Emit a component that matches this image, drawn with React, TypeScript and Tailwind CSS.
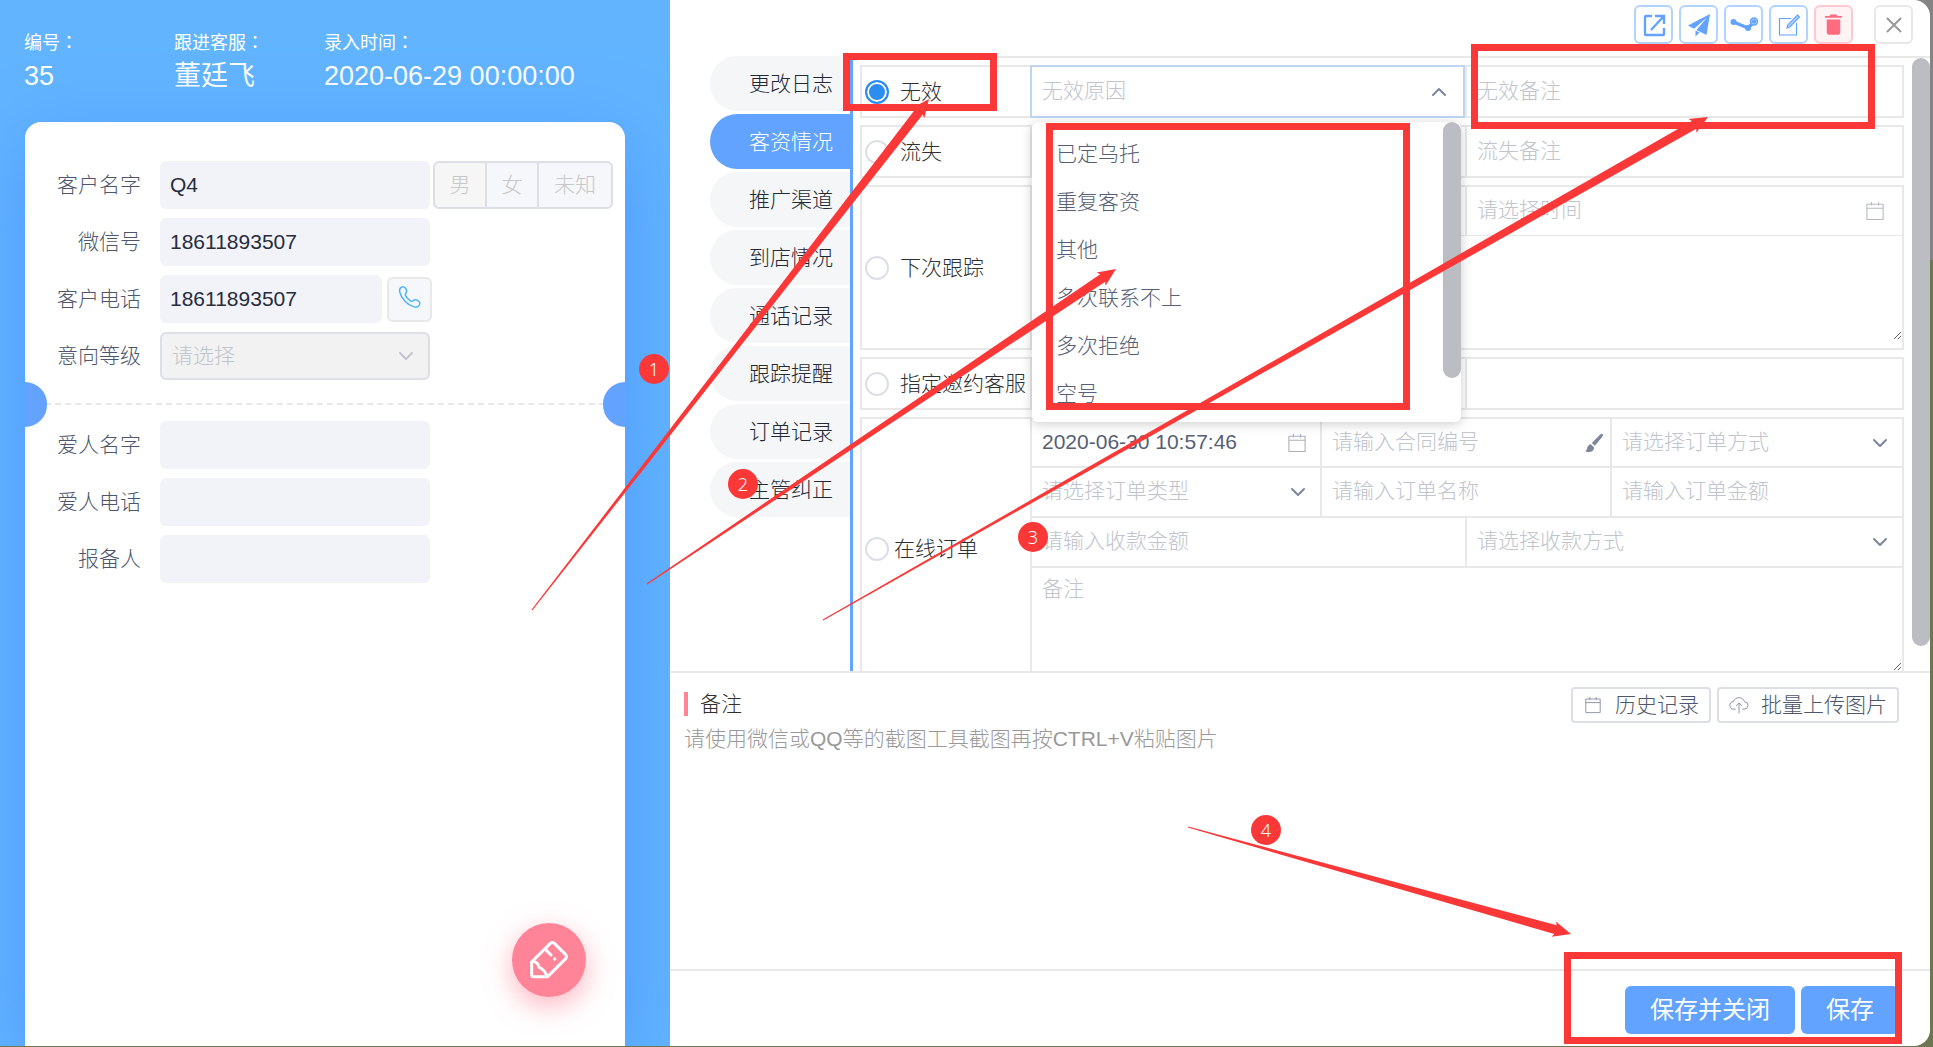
import type { ReactNode } from 'react';
import { ChevronDown, ChevronUp } from 'lucide-react';
import { IoMdTrash } from 'react-icons/io';

const TABS = ['更改日志', '客资情况', '推广渠道', '到店情况', '通话记录', '跟踪提醒', '订单记录', '主管纠正'];
const REASONS = ['已定乌托', '重复客资', '其他', '多次联系不上', '多次拒绝', '空号'];

const FIELD =
  'block h-full w-full min-w-0 bg-transparent px-2.5 pb-0.5 text-[21px] text-[#565f75] outline-none placeholder:text-[#c0c4cc]';

function CalendarIcon({ className }: { className: string }) {
  return (
    <svg viewBox="0 0 20 22" className={className} fill="none" stroke="currentColor" strokeWidth="1.2">
      <path d="M1 3.500h18v17H1zM1 8h18M6 1v4M14 1v4" />
    </svg>
  );
}

function PhoneIcon() {
  return (
    <svg viewBox="0 0 24 24" className="mb-1 size-6" fill="none" stroke="#4db5f5" strokeWidth="1.5">
      <path d="M3.500 2.200c1.800-1 3.600 0 4.600 1.900 1 2 .8 3-.2 4-.9 1-.8 1.700-.2 2.800 1.200 2.200 2.600 3.600 4.700 5 1.100.6 1.800.8 2.700-.1 1.200-1.200 2.600-1.400 4.400-.4 2 1.100 2.700 2.800 1.900 4.600-.9 1.900-3.200 2.500-5.400 1.900C9.500 20 3.200 13.600 1.700 6.900 1.300 4.900 1.700 3.200 3.500 2.200z" />
    </svg>
  );
}

function PencilIcon() {
  return (
    <svg viewBox="90 89 120 120" className="size-10" fill="none" stroke="#fff" strokeWidth="9" strokeLinecap="round" strokeLinejoin="round">
      <path d="M98 155L154 99Q160 94 166 99L200 133Q205 139 200 145L146 199H104Q98 199 98 193Z" />
      <path d="M104 153Q118 157 120 171Q134 176 143 194" />
      <path d="M140 118L156 134" />
      <circle cx="167" cy="146" r="5" fill="#fff" stroke="none" />
    </svg>
  );
}

function OpenIcon() {
  return (
    <svg viewBox="0 0 24 24" className="size-6" fill="none" stroke="currentColor" strokeWidth="2.4">
      <path d="M10 3H4Q3 3 3 4v17q0 1 1 1h17q1 0 1-1v-6M9 17L21 4M13 3h9v8" />
    </svg>
  );
}

function PlaneIcon() {
  return (
    <svg viewBox="0 0 24 24" className="size-6" fill="currentColor">
      <path d="M23 1L1 12.500l6 3.200L20 4.500 9.500 17 19.500 22zM8.500 17.500V23.500L12.500 19.500z" />
    </svg>
  );
}

function SteamIcon() {
  return (
    <svg viewBox="0 0 30 24" className="h-6 w-[30px] shrink-0" fill="none" stroke="currentColor">
      <path d="M4.500 9l14.500 6L25 9" strokeWidth="3.4" strokeLinejoin="round" />
      <circle cx="4.500" cy="9" r="3" fill="currentColor" stroke="none" />
      <circle cx="19" cy="15" r="3" fill="currentColor" stroke="none" />
      <circle cx="25" cy="8.500" r="4.200" fill="currentColor" stroke="none" />
      <circle cx="25" cy="8.500" r="2.500" stroke="#b3d3ff" strokeWidth="0.800" />
    </svg>
  );
}

function EditIcon() {
  return (
    <svg viewBox="0 0 24 24" className="size-6" fill="none" stroke="currentColor" strokeWidth="1.200">
      <path d="M14 5.500H2.500V22H19.500V10" />
      <path d="M10 15l.8-3L20.500 2l2 2-9.700 10z" fill="#b3d3ff" />
    </svg>
  );
}

function BrushIcon() {
  return (
    <svg viewBox="0 0 20 20" className="size-5 shrink-0" fill="#7c869b">
      <path d="M16.500 1.200q1.600-.8 2.300.3.500.9-.3 1.900l-7.700 9.300-3-2.600zM6.800 11.300l3.200 2.900q.4 5-6.200 4.700-1.700 0-2.800-1 1.600-.2 1.900-2 .6-3.800 3.900-4.600z" />
    </svg>
  );
}

function UploadIcon() {
  return (
    <svg viewBox="0 0 24 24" className="size-5" fill="none" stroke="#8d95a5" strokeWidth="1.200">
      <path d="M8 17H6a4.500 4.500 0 01-.8-9A7 7 0 0118.500 8 4.500 4.500 0 0118 17h-2M12 22V9.500M8.500 13L12 9.500l3.500 3.500" />
    </svg>
  );
}

function HeaderItem({ label, value, className }: { label: string; value: string; className: string }) {
  return (
    <div className={className}>
      <div className="text-[18px] leading-[26px]">
        {label}
        <span className="font-['Noto_Sans_CJK_TC']" lang="zh-TW">：</span>
      </div>
      <div className="mt-0.5 text-[27px] leading-[36px] whitespace-nowrap">{value}</div>
    </div>
  );
}

function FormRow({ id, label, children }: { id: string; label: string; children: ReactNode }) {
  return (
    <div className="flex items-center">
      <label htmlFor={id} className="mr-[19px] w-[116px] text-right text-[21px] text-[#4d566b]">
        {label}
      </label>
      {children}
    </div>
  );
}

function FilledInput({ id, value = '', className = 'w-[270px]' }: { id: string; value?: string; className?: string }) {
  return (
    <input
      id={id}
      defaultValue={value}
      className={`h-12 rounded-[6px] bg-[#f2f3f8] px-2.5 text-[21px] text-[#262c3c] outline-none ${className}`}
    />
  );
}

function Sidebar() {
  return (
    <aside className="relative flex flex-col overflow-hidden bg-[#62b4ff] px-6 pt-7 text-white">
      <header className="flex font-normal">
        <HeaderItem label="编号" value="35" className="w-[150px]" />
        <HeaderItem label="跟进客服" value="董廷飞" className="w-[150px]" />
        <HeaderItem label="录入时间" value="2020-06-29 00:00:00" className="flex-1" />
      </header>
      <section className="relative mt-7 mr-[21px] ml-px flex-1 overflow-visible rounded-t-2xl bg-white pt-[39px] shadow-[0_20px_80px_#4e98ff]">
        <div className="flex flex-col gap-[9px]">
          <FormRow id="name" label="客户名字">
            <FilledInput id="name" value="Q4" />
            <fieldset className="ml-[3px] flex h-12 overflow-hidden rounded-[6px] border-2 border-[#dcdfe6] bg-[#f5f7fa] text-[21px] text-[#c8c8c8]">
              <label className="flex w-[50px] items-center justify-center bg-[#f6f6f6]">
                <input type="radio" name="sex" className="sr-only" disabled />男
              </label>
              <label className="flex w-[52px] items-center justify-center border-l-2 border-[#dcdfe6]">
                <input type="radio" name="sex" className="sr-only" disabled />女
              </label>
              <label className="flex w-[74px] items-center justify-center border-l-2 border-[#dcdfe6]">
                <input type="radio" name="sex" className="sr-only" disabled />未知
              </label>
            </fieldset>
          </FormRow>
          <FormRow id="wechat" label="微信号">
            <FilledInput id="wechat" value="18611893507" />
          </FormRow>
          <FormRow id="phone" label="客户电话">
            <FilledInput id="phone" value="18611893507" className="w-[222px]" />
            <button aria-label="拨打电话" className="ml-[5px] flex h-[45px] w-[45px] items-center justify-center rounded-[6px] border-2 border-[#e8e8e8] bg-[#f5f7fa]">
              <PhoneIcon />
            </button>
          </FormRow>
          <FormRow id="level" label="意向等级">
            <div className="relative h-12 w-[270px]">
              <select id="level" disabled className="h-full w-full appearance-none rounded-[6px] border-2 border-[#dcdfe6] bg-[#f2f2f2] px-2.5 text-[21px] text-[#c0c4cc] opacity-100">
                <option>请选择</option>
              </select>
              <ChevronDown className="pointer-events-none absolute top-3 right-3 size-6 text-[#c0c4cc]" />
            </div>
          </FormRow>
        </div>
        <div className="relative flex h-[41px] items-center overflow-visible">
          <div className="mt-1.5 w-full border-t-2 border-dashed border-[#e8e8e8]" />
          <div className="absolute top-0.5 left-0 h-[45px] w-[22px] rounded-r-full bg-[#64a2ff]" />
          <div className="absolute top-0.5 right-0 h-[45px] w-[22px] rounded-l-full bg-[#64a2ff]" />
        </div>
        <div className="flex flex-col gap-[9px]">
          <FormRow id="lover" label="爱人名字"><FilledInput id="lover" /></FormRow>
          <FormRow id="loverPhone" label="爱人电话"><FilledInput id="loverPhone" /></FormRow>
          <FormRow id="reporter" label="报备人"><FilledInput id="reporter" /></FormRow>
        </div>
        <button aria-label="编辑" className="absolute right-[39px] bottom-[49px] flex size-[74px] items-center justify-center rounded-full bg-[#ff8498] shadow-[0_9px_28px_#ff849899]">
          <PencilIcon />
        </button>
      </section>
    </aside>
  );
}

function ToolButton({ label, children }: { label: string; children: ReactNode }) {
  return (
    <button aria-label={label} className="flex size-[39px] items-center justify-center rounded-[6px] border-2 border-[#b3d3ff] bg-white text-[#62a3ff]">
      {children}
    </button>
  );
}

function Toolbar() {
  return (
    <div className="flex h-14 shrink-0 items-start justify-end gap-1.5 pt-[5px] pr-[17px]">
      <ToolButton label="打开"><OpenIcon /></ToolButton>
      <ToolButton label="发送"><PlaneIcon /></ToolButton>
      <ToolButton label="关联"><SteamIcon /></ToolButton>
      <ToolButton label="编辑资料"><EditIcon /></ToolButton>
      <button aria-label="删除" className="flex size-[39px] items-center justify-center rounded-[6px] border-2 border-[#ffc9d1] bg-[#fff3f5] text-[#ff6c7f]">
        <IoMdTrash className="size-[27px]" />
      </button>
      <button aria-label="关闭" className="ml-[15px] flex size-[39px] items-center justify-center rounded-[6px] border-2 border-[#e8e8e8] text-[#999]">
        <svg viewBox="0 0 16 16" className="size-4" stroke="currentColor" strokeWidth="2">
          <path d="M1 1l14 14M15 1L1 15" />
        </svg>
      </button>
    </div>
  );
}

function Tabs() {
  return (
    <nav className="flex w-[183px] shrink-0 flex-col gap-[3px] border-r-[3px] border-[#62a3ff] pl-10">
      {TABS.map((tab) => (
        <button
          key={tab}
          className={`h-[55px] rounded-l-full pr-[17px] text-right text-[21px] ${
            tab === '客资情况' ? 'bg-[#62a3ff] text-white' : 'bg-[#f4f6f8] text-[#222834]'
          }`}
        >
          {tab}
        </button>
      ))}
    </nav>
  );
}

function Option({
  label,
  checked = false,
  className = '',
  gap = 'ml-[11px]',
}: {
  label: string;
  checked?: boolean;
  className?: string;
  gap?: string;
}) {
  return (
    <label className={`flex w-[170px] shrink-0 items-center border-r-2 border-[#e8e8e8] pl-[3px] text-[21px] whitespace-nowrap text-[#303030] ${className}`}>
      <input
        type="radio"
        name="status"
        defaultChecked={checked}
        className="size-6 shrink-0 appearance-none rounded-full border-2 border-[#dcdfe6] bg-white checked:border-[#2d8cf0] checked:bg-[#2d8cf0] checked:shadow-[inset_0_0_0_2px_#fff]"
      />
      <span className={gap}>{label}</span>
    </label>
  );
}

function Select({ label }: { label: string }) {
  return (
    <div className="relative h-full">
      <select aria-label={label} className={`${FIELD} appearance-none text-[#c0c4cc]`}>
        <option>{label}</option>
      </select>
      <ChevronDown className="pointer-events-none absolute top-3 right-2.5 size-6 text-[#7c869b]" />
    </div>
  );
}

const ROW = 'flex border-2 border-[#e8e8e8]';
const CELL_BORDER = 'border-r-2 border-[#e8e8e8]';

function StatusTable() {
  return (
    <div className="flex min-w-0 flex-1 flex-col gap-[7px]">
      <div className={`${ROW} h-[53px]`}>
        <Option label="无效" checked />
        <div className="grid flex-1 grid-cols-2">
          <div className={`relative ${CELL_BORDER}`}>
            <div className="mr-0.5 flex h-full items-center pr-3 outline-2 outline-[#bdd5f1]">
              <input role="combobox" aria-expanded="true" aria-controls="reasons" aria-label="无效原因" readOnly placeholder="无效原因" className={FIELD} />
              <ChevronUp className="size-6 shrink-0 text-[#7c869b]" />
            </div>
            <div className="absolute top-[55px] left-0 z-10 flex h-[300px] w-[429px] items-start justify-between rounded-[6px] bg-white shadow-[0_2px_12px_#00000033]">
              <ul id="reasons" role="listbox" className="h-[285px] flex-1 overflow-hidden pt-2 pl-6 text-[21px] text-[#565f75]">
                {REASONS.map((reason) => (
                  <li key={reason} role="option" className="flex h-12 items-center">{reason}</li>
                ))}
              </ul>
              <div className="h-64 w-[18px] rounded-full bg-[#bbbdc2]" />
            </div>
          </div>
          <input aria-label="无效备注" placeholder="无效备注" className={FIELD} />
        </div>
      </div>
      <div className={`${ROW} h-[53px]`}>
        <Option label="流失" />
        <div className="grid flex-1 grid-cols-2">
          <div className={CELL_BORDER}><Select label="流失原因" /></div>
          <input aria-label="流失备注" placeholder="流失备注" className={FIELD} />
        </div>
      </div>
      <div className={`${ROW} h-[165px]`}>
        <Option label="下次跟踪" />
        <div className="flex flex-1 flex-col">
          <div className="grid h-[49px] grid-cols-2 border-b border-[#e8e8e8]">
            <div className={CELL_BORDER}><Select label="跟踪方式" /></div>
            <div className="flex items-center pr-[18px]">
              <input aria-label="请选择时间" placeholder="请选择时间" className={FIELD} />
              <CalendarIcon className="h-5 w-[18px] shrink-0 text-[#b4b9c4]" />
            </div>
          </div>
          <textarea aria-label="跟踪备注" className="mb-2 w-full flex-1 resize bg-transparent px-2.5 text-[21px] outline-none" />
        </div>
      </div>
      <div className={`${ROW} h-[53px]`}>
        <Option label="指定邀约客服" />
        <div className="grid flex-1 grid-cols-2">
          <div className={CELL_BORDER} />
          <div />
        </div>
      </div>
      <div className="flex flex-1 border-2 border-b-0 border-[#e8e8e8]">
        <Option label="在线订单" gap="ml-[5px]" className="pt-2" />
        <div className="flex flex-1 flex-col">
          <div className="grid h-[49px] shrink-0 grid-cols-3 border-b-2 border-[#e8e8e8]">
            <div className={`flex items-center pr-3.5 ${CELL_BORDER}`}>
              <input aria-label="订单时间" defaultValue="2020-06-30 10:57:46" className={FIELD} />
              <CalendarIcon className="h-5 w-[18px] shrink-0 text-[#a9afbc]" />
            </div>
            <div className={`flex items-center pr-1.5 ${CELL_BORDER}`}>
              <input aria-label="合同编号" placeholder="请输入合同编号" className={FIELD} />
              <BrushIcon />
            </div>
            <Select label="请选择订单方式" />
          </div>
          <div className="grid h-[50px] shrink-0 grid-cols-3 border-b-2 border-[#e8e8e8]">
            <div className={CELL_BORDER}><Select label="请选择订单类型" /></div>
            <div className={CELL_BORDER}><input aria-label="订单名称" placeholder="请输入订单名称" className={FIELD} /></div>
            <input aria-label="订单金额" placeholder="请输入订单金额" className={FIELD} />
          </div>
          <div className="grid h-[50px] shrink-0 grid-cols-2 border-b-2 border-[#e8e8e8]">
            <div className={CELL_BORDER}><input aria-label="收款金额" placeholder="请输入收款金额" className={FIELD} /></div>
            <Select label="请选择收款方式" />
          </div>
          <textarea aria-label="备注" placeholder="备注" className="w-full flex-1 resize bg-transparent px-2.5 pt-[7px] text-[21px] leading-[28px] outline-none placeholder:text-[#c0c4cc]" />
        </div>
      </div>
    </div>
  );
}

function Notes() {
  return (
    <section className="h-[298px] shrink-0 border-t-2 border-[#e8e8e8] pt-3.5 pr-[31px] pl-3.5">
      <div className="flex h-9 items-center gap-1.5">
        <h2 className="mb-0.5 flex flex-1 items-center gap-3 text-[21px] text-[#303030]">
          <span className="h-6 w-1 bg-[#ff8498]" />
          备注
        </h2>
        <button className="flex h-9 items-center rounded border-2 border-[#dcdfe6] px-2.5 text-[21px] text-[#4d566b]">
          <CalendarIcon className="mr-3.5 ml-0.5 h-[18px] w-4 text-[#8d95a5]" />
          历史记录
        </button>
        <button className="flex h-9 items-center rounded border-2 border-[#dcdfe6] px-2.5 text-[21px] text-[#4d566b]">
          <span className="mr-3"><UploadIcon /></span>
          批量上传图片
        </button>
      </div>
      <textarea
        aria-label="粘贴图片"
        placeholder="请使用微信或QQ等的截图工具截图再按CTRL+V粘贴图片"
        className="block h-[200px] w-full resize-none text-[21px] leading-[32px] outline-none placeholder:text-[#999]"
      />
    </section>
  );
}

function Badge({ n, className }: { n: number; className: string }) {
  return (
    <span className={`absolute flex size-[30px] items-center justify-center rounded-full bg-[#fb3838] font-['Noto_Sans'] text-[18px] text-white ${className}`}>
      {n}
    </span>
  );
}

/* Arrows that widen from the tail to the head. */
const ARROWS = [
  [532, 610, 929, 99],
  [647, 584, 1116, 269],
  [823, 620, 1708, 117],
  [1188, 827, 1571, 934],
];

function arrowPoints([x1, y1, x2, y2]: number[]) {
  const length = Math.hypot(x2 - x1, y2 - y1);
  const ux = (x2 - x1) / length;
  const uy = (y2 - y1) / length;
  const at = (along: number, side: number) =>
    `${x1 + ux * along - uy * side},${y1 + uy * along + ux * side}`;
  return [
    at(0, 0.6), at(length - 16, 4.5), at(length - 18, 8), at(length, 0),
    at(length - 18, -8), at(length - 16, -4.5), at(0, -0.6),
  ].join(' ');
}

function Annotations() {
  return (
    <div className="pointer-events-none absolute inset-0 z-20 overflow-hidden">
      <div className="absolute top-[53px] left-[843px] h-[58px] w-[154px] border-[7px] border-[#fb3838]" />
      <div className="absolute top-[44px] left-[1471px] h-[85px] w-[404px] border-[7px] border-[#fb3838]" />
      <div className="absolute top-[123px] left-[1046px] h-[287px] w-[364px] border-[7px] border-[#fb3838]" />
      <div className="absolute top-[952px] left-[1564px] h-[92px] w-[338px] border-[7px] border-[#fb3838]" />
      <svg viewBox="0 0 1933 1047" className="absolute top-0 left-0 h-[1047px] w-[1933px]" fill="#fb3838">
        {ARROWS.map((arrow) => <polygon key={arrow.join()} points={arrowPoints(arrow)} />)}
      </svg>
      <Badge n={1} className="top-[354px] left-[639px]" />
      <Badge n={2} className="top-[469px] left-[728px]" />
      <Badge n={3} className="top-[522px] left-[1018px]" />
      <Badge n={4} className="top-[815px] left-[1251px]" />
    </div>
  );
}

export default function App() {
  return (
    <div className="relative h-screen overflow-hidden bg-[linear-gradient(#848484_260px,#6c7650_260px)] pr-[3px] pb-px font-['Liberation_Sans','Noto_Sans_CJK_SC',sans-serif] font-light" lang="zh-CN">
      <div className="grid h-full grid-cols-[670px_1fr] overflow-hidden rounded-r-2xl bg-white">
        <Sidebar />
        <main className="flex min-h-0 min-w-0 flex-col">
          <Toolbar />
          <div className="flex min-h-0 flex-1">
            <Tabs />
            <div className="flex min-w-0 flex-1 gap-2 border-t-2 border-[#e8e8e8] pl-[7px]">
              <div className="flex min-w-0 flex-1 pt-[7px]"><StatusTable /></div>
              <div className="h-[588px] w-[18px] rounded-full bg-[#bbbdc2]" />
            </div>
          </div>
          <Notes />
          <footer className="flex h-[77px] shrink-0 items-start justify-end gap-1.5 border-t-2 border-[#e8e8e8] pt-[15px] pr-[31px] text-[24px] font-normal text-white">
            <button className="h-12 rounded-[6px] bg-[#62a3ff] px-[25px]">保存并关闭</button>
            <button className="h-12 rounded-[6px] bg-[#62a3ff] px-[25px]">保存</button>
          </footer>
        </main>
      </div>
      <Annotations />
    </div>
  );
}
